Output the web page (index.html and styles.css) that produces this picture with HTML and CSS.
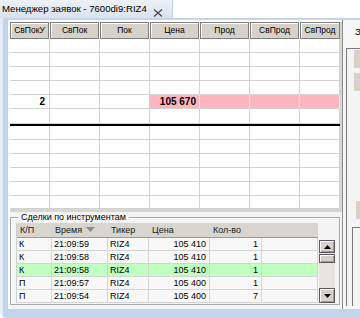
FILE: index.html
```html
<!DOCTYPE html>
<html lang="ru">
<head>
  <meta charset="UTF-8">
  <title>Менеджер заявок - 7600di9:RIZ4</title>
  <link rel="stylesheet" href="styles.css">
</head>
<body>

  <!-- Tab strip -->
  <div class="tabs">
    <div class="tab">
      <span class="tab-title">Менеджер заявок - 7600di9:RIZ4</span>
      <svg class="tab-close" width="10" height="8" viewBox="0 0 10 8">
        <path d="M1 0.5 L9 7.5 M9 0.5 L1 7.5" stroke="#4a4a4a" stroke-width="1.3" fill="none"/>
      </svg>
    </div>
  </div>

  <div class="frame">
    <div class="content">
      <div class="main">

        <!-- Order book -->
        <div class="book">
          <div class="book-head">
            <div class="hcell">СвПокУ</div>
            <div class="hcell">СвПок</div>
            <div class="hcell">Пок</div>
            <div class="hcell">Цена</div>
            <div class="hcell">Прод</div>
            <div class="hcell">СвПрод</div>
            <div class="hcell">СвПрод</div>
          </div>
          <div class="brow"><div class="bcell"></div><div class="bcell"></div><div class="bcell"></div><div class="bcell"></div><div class="bcell"></div><div class="bcell"></div><div class="bcell"></div></div>
          <div class="brow"><div class="bcell"></div><div class="bcell"></div><div class="bcell"></div><div class="bcell"></div><div class="bcell"></div><div class="bcell"></div><div class="bcell"></div></div>
          <div class="brow"><div class="bcell"></div><div class="bcell"></div><div class="bcell"></div><div class="bcell"></div><div class="bcell"></div><div class="bcell"></div><div class="bcell"></div></div>
          <div class="brow"><div class="bcell"></div><div class="bcell"></div><div class="bcell"></div><div class="bcell"></div><div class="bcell"></div><div class="bcell"></div><div class="bcell"></div></div>
          <div class="brow">
            <div class="bcell num">2</div>
            <div class="bcell"></div>
            <div class="bcell"></div>
            <div class="bcell num ask">105 670</div>
            <div class="bcell ask"></div>
            <div class="bcell ask"></div>
            <div class="bcell ask"></div>
          </div>
          <div class="brow tall"><div class="bcell"></div><div class="bcell"></div><div class="bcell"></div><div class="bcell"></div><div class="bcell"></div><div class="bcell"></div><div class="bcell"></div></div>
          <div class="spread"></div>
          <div class="brow"><div class="bcell"></div><div class="bcell"></div><div class="bcell"></div><div class="bcell"></div><div class="bcell"></div><div class="bcell"></div><div class="bcell"></div></div>
          <div class="brow"><div class="bcell"></div><div class="bcell"></div><div class="bcell"></div><div class="bcell"></div><div class="bcell"></div><div class="bcell"></div><div class="bcell"></div></div>
          <div class="brow"><div class="bcell"></div><div class="bcell"></div><div class="bcell"></div><div class="bcell"></div><div class="bcell"></div><div class="bcell"></div><div class="bcell"></div></div>
          <div class="brow"><div class="bcell"></div><div class="bcell"></div><div class="bcell"></div><div class="bcell"></div><div class="bcell"></div><div class="bcell"></div><div class="bcell"></div></div>
          <div class="brow"><div class="bcell"></div><div class="bcell"></div><div class="bcell"></div><div class="bcell"></div><div class="bcell"></div><div class="bcell"></div><div class="bcell"></div></div>
          <div class="brow short"><div class="bcell"></div><div class="bcell"></div><div class="bcell"></div><div class="bcell"></div><div class="bcell"></div><div class="bcell"></div><div class="bcell"></div></div>
          <div class="book-bottom"></div>
        </div>

        <!-- Deals -->
        <fieldset class="deals">
          <legend>Сделки по инструментам</legend>
          <div class="deals-body">
            <div class="deals-table">
              <div class="drow dhead">
                <div class="dcell">К/П</div>
                <div class="dcell sorted">Время
                  <svg width="9" height="5" viewBox="0 0 9 5"><polygon points="0,0 9,0 4.5,5" fill="#8a8a8a"/></svg>
                </div>
                <div class="dcell">Тикер</div>
                <div class="dcell">Цена</div>
                <div class="dcell">Кол-во</div>
                <div class="dcell"></div>
              </div>
              <div class="drow">
                <div class="dcell">К</div><div class="dcell">21:09:59</div><div class="dcell">RIZ4</div>
                <div class="dcell right">105 410</div><div class="dcell right">1</div><div class="dcell"></div>
              </div>
              <div class="drow">
                <div class="dcell">К</div><div class="dcell">21:09:58</div><div class="dcell">RIZ4</div>
                <div class="dcell right">105 410</div><div class="dcell right">1</div><div class="dcell"></div>
              </div>
              <div class="drow hit">
                <div class="dcell">К</div><div class="dcell">21:09:58</div><div class="dcell">RIZ4</div>
                <div class="dcell right">105 410</div><div class="dcell right">1</div><div class="dcell"></div>
              </div>
              <div class="drow">
                <div class="dcell">П</div><div class="dcell">21:09:57</div><div class="dcell">RIZ4</div>
                <div class="dcell right">105 400</div><div class="dcell right">1</div><div class="dcell"></div>
              </div>
              <div class="drow">
                <div class="dcell">П</div><div class="dcell">21:09:54</div><div class="dcell">RIZ4</div>
                <div class="dcell right">105 400</div><div class="dcell right">7</div><div class="dcell"></div>
              </div>
            </div>
            <div class="scrollbar">
              <div class="sb-btn up">
                <svg width="7" height="4" viewBox="0 0 7 4"><polygon points="0,4 7,4 3.5,0" fill="#000"/></svg>
              </div>
              <div class="sb-btn thumb"></div>
              <div class="sb-track"></div>
              <div class="sb-btn down">
                <svg width="7" height="4" viewBox="0 0 7 4"><polygon points="0,0 7,0 3.5,4" fill="#000"/></svg>
              </div>
            </div>
          </div>
        </fieldset>

      </div>

      <!-- Right side panel (cut off) -->
      <div class="side">
        <div class="side-tab">З</div>
        <div class="side-box">
          <div class="side-btn"></div>
          <div class="side-btn"></div>
          <div class="side-btn low"></div>
          <div class="side-inner"></div>
        </div>
      </div>
    </div>
  </div>

</body>
</html>
```

FILE: styles.css
```css
body {
  margin: 0;
  width: 360px;
  height: 318px;
  overflow: hidden;
  background: #fff;
  font-family: "Liberation Sans", Arial, sans-serif;
  font-size: 9px;
  color: #000;
}

/* tab strip */

.tabs {
  height: 18px;
  display: flex;
}

.tab {
  width: 173px;
  box-sizing: border-box;
  display: flex;
  justify-content: space-between;
  padding: 3px 9px 0 2px;
  background: linear-gradient(#edf1f7, #d9e2ee);
  border-right: 1px solid #c3cfe0;
}

.tab-title {
  font-size: 9.6px;
  line-height: 12px;
}

.tab-close {
  align-self: flex-end;
  margin-bottom: 1px;
}

/* window frame */

.frame {
  height: 300px;
  box-sizing: border-box;
  padding: 2px 0 9px 8px;
  background: linear-gradient(to right, #e4ecf7 3px, #c3d4ee 3px);
  border-radius: 0 0 0 6px;
}

.content {
  height: 289px;
  display: flex;
  padding-left: 2px;
  background: #f4f4f4;
  box-shadow: inset 2px 2px #fff;
}

.main {
  width: 333px;
  display: flex;
  flex-direction: column;
}

/* order book */

.book {
  margin-top: 2px;
  width: 332px;
  background: #fff;
  border-right: 2px solid #d9d6cf;
  box-sizing: border-box;
}

.book-head,
.brow {
  display: grid;
  grid-template-columns: 40px repeat(5, 50px) 40px;
}

.book-head {
  height: 17px;
}

.hcell {
  box-sizing: border-box;
  background: #d6d2ca;
  border: 1px solid #7d7d7d;
  box-shadow: inset 1px 1px #fff;
  text-align: center;
  font-size: 8.5px;
  line-height: 15px;
  margin-right: 1px;
  white-space: nowrap;
  overflow: hidden;
}

.hcell:last-child {
  margin-right: 0;
}

.brow {
  height: 14px;
}

.brow.tall {
  height: 15px;
}

.brow.short {
  height: 13px;
}

.bcell {
  box-sizing: border-box;
  border-right: 1px solid #d2d2d2;
  border-bottom: 1px solid #d2d2d2;
  line-height: 13px;
}

.bcell.num {
  text-align: right;
  font-weight: bold;
  font-size: 10px;
  padding-right: 4px;
}

.bcell.ask {
  background: #ffb5c0;
  border-right-color: #ececec;
}

.bcell.ask.num {
  padding-right: 3px;
}

.spread {
  height: 2px;
  background: #000;
}

.book-bottom {
  height: 3px;
  background: #d9d6cf;
}

/* deals group */

.deals {
  margin: -1px 0 0 0;
  padding: 0 4px 1px 5px;
  width: 330px;
  box-sizing: border-box;
  border: 1px solid #a9a9a9;
  box-shadow: inset 1px 1px #fff;
  min-width: 0;
}

.deals legend {
  padding: 0 3px;
  margin-left: 2px;
  line-height: 12px;
  font-size: 9px;
}

.deals-body {
  display: flex;
}

.deals-table {
  width: 302px;
  border-left: 1px solid #d0d0d0;
  box-sizing: border-box;
}

.drow {
  display: grid;
  grid-template-columns: 35px 56px 41px 61px 52px 56px;
  height: 13px;
  background: #f8f8f8;
}

.drow.hit {
  background: #c0ffc0;
}

.dcell {
  box-sizing: border-box;
  border-right: 1px solid #d4d4d4;
  border-bottom: 1px solid #d4d4d4;
  line-height: 12px;
  padding-left: 2px;
  white-space: nowrap;
}

.dcell.right {
  text-align: right;
  padding: 0 3px 0 0;
}

.drow.dhead {
  height: 15px;
  background: #d8d5cf;
}

.dhead .dcell {
  border-right: none;
  border-bottom: 1px solid #9a9a9a;
  line-height: 14px;
  padding-left: 3px;
  color: #222;
}

.dhead .sorted {
  display: flex;
  justify-content: space-between;
  align-items: center;
  padding-right: 13px;
}

.dhead .sorted svg {
  margin-top: -1px;
}

/* scrollbar */

.scrollbar {
  width: 16px;
  margin: 17px 0 0 1px;
  height: 63px;
  display: flex;
  flex-direction: column;
  background: #e6e4df;
}

.sb-btn {
  box-sizing: border-box;
  background: #d6d2ca;
  border: 1px solid #5a5a5a;
  box-shadow: inset 1px 1px #fff, inset -1px -1px #9a9a9a;
  display: flex;
  align-items: center;
  justify-content: center;
}

.sb-btn.up {
  height: 13px;
}

.sb-btn.thumb {
  height: 9px;
  margin-top: 1px;
}

.sb-track {
  flex: 1;
}

.sb-btn.down {
  height: 15px;
}

/* side panel */

.side {
  flex: 1;
  border-left: 1px solid #8c8c8c;
  padding-left: 3px;
  display: flex;
  flex-direction: column;
  background: #f7f7f7;
}

.side-tab {
  height: 28px;
  padding-left: 9px;
  font-size: 9.6px;
  line-height: 20px;
  padding-top: 2px;
  box-sizing: border-box;
}

.side-box {
  flex: 1;
  margin-bottom: 3px;
  border-left: 1px solid #7a7a7a;
  border-top: 1px solid #7a7a7a;
  padding: 1px 0 0 7px;
  display: flex;
  flex-direction: column;
  background: #f4f4f4;
}

.side-btn {
  height: 18px;
  margin-bottom: 5px;
  background: #d6d2ca;
}

.side-btn.low {
  margin: 105px 0 0 2px;
}

.side-inner {
  flex: 1;
  margin: 8px 0 0 -2px;
  border-left: 1px solid #7a7a7a;
  border-top: 1px solid #7a7a7a;
}
```
